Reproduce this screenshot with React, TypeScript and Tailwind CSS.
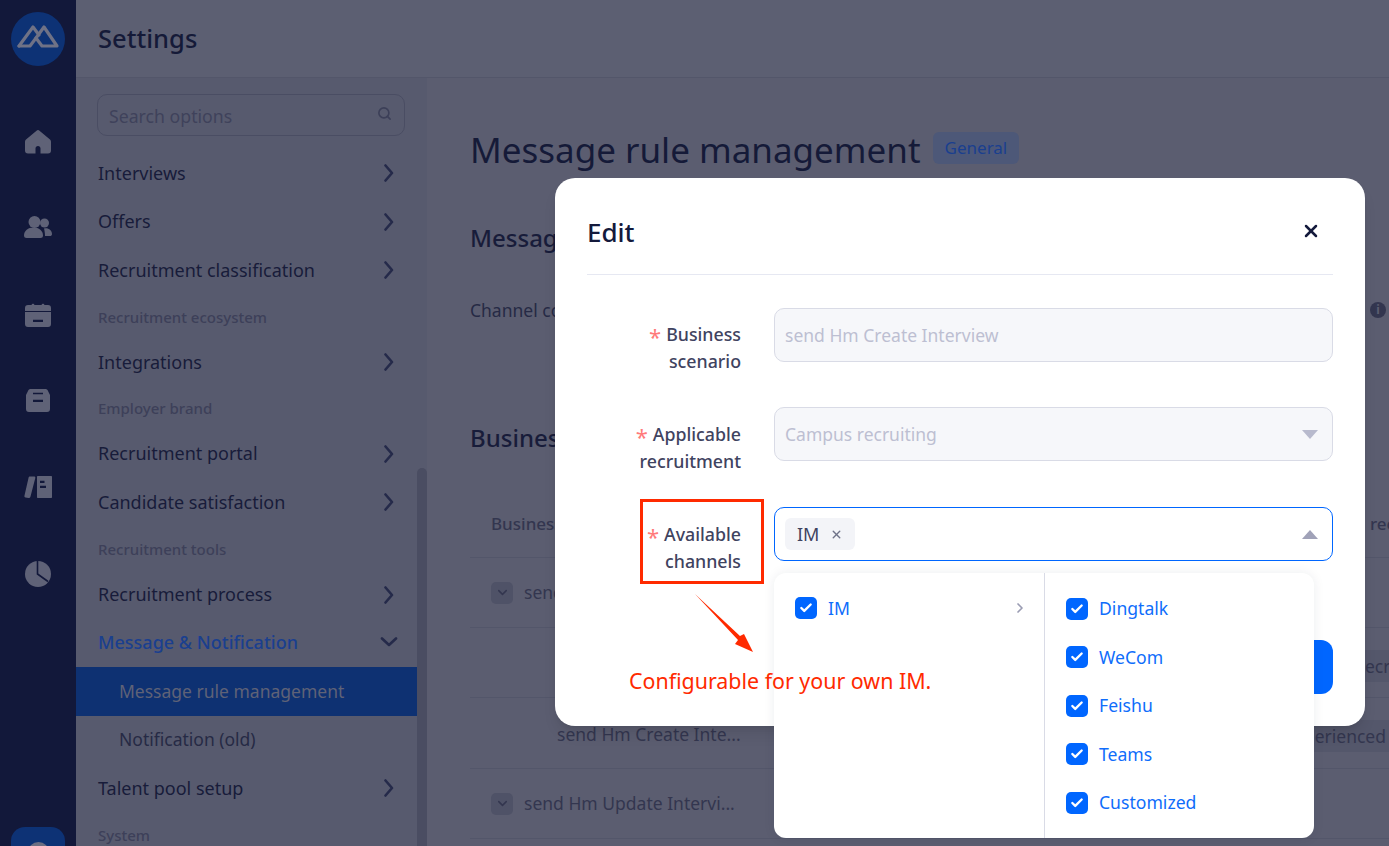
import React from "react";
import { ChevronDown, Search, X, Check, ChevronRight } from "lucide-react";

const FONT = "font-['Noto_Sans','Liberation_Sans',sans-serif]";

function NavRow({ label, open, className = "" }: { label: string; open?: boolean; className?: string }) {
  return (
    <div className={`flex h-[48.6px] items-center justify-between pl-[22px] pr-[23px] text-[18px] -translate-y-px ${open ? "text-[#1a3f8f] font-medium" : "text-[#181c3a]"} ${className}`}>
      <span>{label}</span>
      {open ? (
        <svg viewBox="0 0 18 10" className="w-[18px] h-[10px] -mr-[4px]" fill="none" stroke="#252a4a" strokeWidth="2.6" strokeLinecap="round" strokeLinejoin="round">
          <polyline points="2,1.500 9,8 16,1.500" />
        </svg>
      ) : (
        <svg viewBox="0 0 10 18" className="w-[10px] h-[18px]" fill="none" stroke="#252a4a" strokeWidth="2.6" strokeLinecap="round" strokeLinejoin="round">
          <polyline points="1.500,1.500 8,9 1.500,16.500" />
        </svg>
      )}
    </div>
  );
}

function NavHead({ label, className = "" }: { label: string; className?: string }) {
  return <div className={`flex h-[43px] items-center pl-[22px] text-[15px] font-medium text-[#3d4059] ${className}`}>{label}</div>;
}

function RailIcon({ children, className }: { children: React.ReactNode; className: string }) {
  return (
    <svg viewBox="0 0 28 28" className={`w-[28px] h-[28px] shrink-0 ${className}`} fill="#5f6277">
      {children}
    </svg>
  );
}

function Rail() {
  return (
    <div className="w-[76px] shrink-0 bg-[#12183a] flex flex-col items-center overflow-hidden">
      <div className="mt-[12px] w-[54px] h-[54px] shrink-0 rounded-full bg-[#0d3275]">
        <svg viewBox="0 0 54 54" className="w-[54px] h-[54px]" fill="none" stroke="#6f7286" strokeWidth="3.2" strokeLinejoin="round" strokeLinecap="round">
          <path d="M8 34 L22 15 L28 23" />
          <path d="M8 34 L19 34 L25 26" />
          <path d="M25 26 L33 15 L46 34 L31 34 L25 26" />
        </svg>
      </div>
      <RailIcon className="mt-[62px]">
        <path fillRule="evenodd" d="M12.500 2.700 C13.400 1.900 14.600 1.900 15.500 2.700 L26 11.500 C26.700 12.100 27 12.800 27 13.700 L27 22.500 C27 24.500 26 25.500 24 25.500 L4 25.500 C2 25.500 1 24.500 1 22.500 L1 13.700 C1 12.800 1.300 12.100 2 11.500 Z M11.500 25.500 L16.500 25.500 L16.500 20.500 C16.500 19 15.500 18 14 18 C12.500 18 11.500 19 11.500 20.500 Z" />
      </RailIcon>
      <RailIcon className="mt-[57px]">
        <circle cx="10.500" cy="9" r="6" />
        <circle cx="20.500" cy="10" r="4.500" />
        <path d="M0 22.500 C0 18 4 14.500 9.500 14.500 C15 14.500 19 18 19 22.500 C19 24.200 18 25 16.500 25 L2.500 25 C1 25 0 24.200 0 22.500 Z" />
        <path d="M20 15.500 C24.500 14.500 28 17.500 28 21 C28 22.500 27 23 26 23 L21 23 C21 20 20.500 17.500 20 15.500 Z" />
      </RailIcon>
      <RailIcon className="mt-[60px]">
        <path d="M4 4 L7.500 4 C8 2.400 10 2.400 10.500 4 L17.500 4 C18 2.400 20 2.400 20.500 4 L24 4 C26 4 27 5 27 7 L27 10 L1 10 L1 7 C1 5 2 4 4 4 Z" />
        <path fillRule="evenodd" d="M1 11 L27 11 L27 23 C27 25 26 26 24 26 L4 26 C2 26 1 25 1 23 Z M9 18.700 L9 21 L19 21 L19 18.700 Z" />
      </RailIcon>
      <RailIcon className="mt-[58px]">
        <path fillRule="evenodd" d="M7 2 L21 2 C22.500 2 23.500 2.500 24 4 L26 8 L26 22 C26 24 25 25 23 25 L5 25 C3 25 2 24 2 22 L2 8 L4 4 C4.500 2.500 5.500 2 7 2 Z M9 5.800 L9 7.300 L19 7.300 L19 5.800 Z M9 12.800 L9 15 L19 15 L19 12.800 Z" />
      </RailIcon>
      <RailIcon className="mt-[58px]">
        <path d="M6 3.500 L10 3.500 C11 3.500 11.500 4 11.300 5 L6.500 23.500 C6.200 24.700 5.500 25 4.500 25 L1.500 24.500 C0.500 24.300 0.200 23.500 0.500 22.500 L4.500 5 C4.700 4 5 3.500 6 3.500 Z" />
        <path fillRule="evenodd" d="M14 3 L27 3 C27.700 3 28 3.300 28 4 L28 24 C28 24.700 27.700 25 27 25 L14 25 C13.300 25 13 24.700 13 24 L13 4 C13 3.300 13.300 3 14 3 Z M16 7.800 L16 10 L20.500 10 L20.500 7.800 Z M16 12.800 L16 15 L22 15 L22 12.800 Z" />
      </RailIcon>
      <RailIcon className="mt-[58px]">
        <circle cx="14" cy="15" r="13" />
        <path d="M13.500 2 L13.500 15 L24 22.500" fill="none" stroke="#12183a" strokeWidth="1.600" />
      </RailIcon>
      <div className="mt-[240px] w-[54px] h-[60px] shrink-0 rounded-[14px] bg-[#0d3275] flex justify-center pt-[15px]">
        <div className="w-[21px] h-[21px] rounded-full bg-[#6b6e82]" />
      </div>
    </div>
  );
}

function Sidebar() {
  return (
    <div className="w-[351px] shrink-0 flex bg-[#575a6e] overflow-hidden">
      <div className="w-[341px] shrink-0 pt-[16px]">
        <div className="ml-[21px] mr-[12px] h-[42px] rounded-[10px] border border-[#4a4d63] flex items-center justify-between pl-[11px] pr-[12px] pt-[2px] text-[17.7px] text-[#3f425b] mb-[14px]">
          <span>Search options</span>
          <Search size={15} strokeWidth={2.6} className="text-[#3c3f58] -mt-[6px]" />
        </div>
        <NavRow label="Interviews" />
        <NavRow label="Offers" />
        <NavRow label="Recruitment classification" />
        <NavHead label="Recruitment ecosystem" />
        <NavRow label="Integrations" />
        <NavHead label="Employer brand" className="-translate-y-px" />
        <NavRow label="Recruitment portal" />
        <NavRow label="Candidate satisfaction" />
        <NavHead label="Recruitment tools" />
        <NavRow label="Recruitment process" className="translate-y-0" />
        <NavRow label="Message & Notification" open />
        <div className="h-[49px] -mt-px bg-[#0e3172] flex items-center pl-[43px] text-[17.5px] text-[#5f6277]">Message rule management</div>
        <div className="h-[47px] mb-[2px] flex items-center pl-[43px] text-[17.5px] text-[#262a45]">Notification (old)</div>
        <NavRow label="Talent pool setup" />
        <NavHead label="System" />
      </div>
      <div className="w-[10px] shrink-0 pt-[390px]">
        <div className="h-full rounded-t-[5px] bg-[#4a4d62]" />
      </div>
    </div>
  );
}

function ExpandBox() {
  return (
    <span className="w-[22px] h-[22px] rounded-[5px] bg-[#4f5267] flex items-center justify-center mr-[11px]">
      <ChevronDown size={15} strokeWidth={2.4} className="text-[#33364f]" />
    </span>
  );
}

function Content() {
  return (
    <div className="flex-1 min-w-0 bg-[#5b5d70] pl-[43px] overflow-hidden text-[#181c3a]">
      <div className="flex items-center h-[54px] mt-[45px]">
        <span className="text-[35px] text-[#151a38] whitespace-nowrap">Message rule management</span>
        <span className="ml-[12px] -mt-[4px] h-[32px] px-[12px] rounded-[6px] bg-[#4d5878] text-[#1a3f8f] text-[17px] flex items-center">General</span>
      </div>
      <div className="text-[24px] font-medium mt-[44px] h-[34px] leading-[34px]">Message settings</div>
      <div className="flex justify-between items-center mt-[41px] h-[28px] text-[17.5px] text-[#262a45] pr-[2px]">
        <span>Channel configuration</span>
        <span className="w-[16px] h-[16px] rounded-full bg-[#33364f] text-[#5b5d70] text-[12px] font-bold flex items-center justify-center mr-[1px]">i</span>
      </div>
      <div className="text-[24px] font-medium mt-[97px] h-[34px] leading-[34px]">Business scenarios</div>
      <div className="mt-[52px] h-[51px] pb-[16px] border-b border-[#53566a] flex justify-between items-center pl-[21px] text-[17px] font-medium text-[#33364f]">
        <span>Business scenario</span>
        <span className="w-[19px] overflow-hidden whitespace-nowrap">recruitment</span>
      </div>
      <div className="h-[70px] border-b border-[#53566a] flex items-center pl-[21px] text-[17.5px] text-[#33364f]">
        <ExpandBox />
        <span>send Hm Create Interview</span>
      </div>
      <div className="h-[70px] border-b border-[#53566a] flex items-center justify-end pt-[6px]">
        <span className="h-[32px] w-[24px] bg-[#54576b] overflow-hidden whitespace-nowrap text-[17.5px] leading-[32px] text-[#33364f]">ecruiting</span>
      </div>
      <div className="h-[71px] border-b border-[#53566a] flex items-center justify-between pl-[87px] pt-[2px] text-[17.5px] text-[#33364f]">
        <span>send Hm Create Inte...</span>
        <span className="h-[32px] mt-[3px] flex items-center bg-[#54576b] pl-[6px] pr-[3px] pt-[1px]">Experienced</span>
      </div>
      <div className="h-[70px] border-b border-[#53566a] flex items-center pl-[21px] text-[17.5px] text-[#33364f]">
        <ExpandBox />
        <span>send Hm Update Intervi...</span>
      </div>
    </div>
  );
}

function CheckBox() {
  return (
    <span className="w-[22px] h-[22px] rounded-[5px] bg-[#0066ff] flex items-center justify-center shrink-0">
      <Check size={14} strokeWidth={4} className="text-white" />
    </span>
  );
}

function Option({ label }: { label: string }) {
  return (
    <div className="h-[48.5px] flex items-center gap-[11px] text-[17.6px] text-[#0f6dfb]">
      <CheckBox />
      <span>{label}</span>
    </div>
  );
}

function Field({ lines, children, mb, pt }: { lines: [string, string]; children: React.ReactNode; mb: string; pt: string }) {
  return (
    <div className={`flex h-[54px] ${mb}`}>
      <div className={`w-[155px] shrink-0 pr-[1px] text-right text-[17.8px] leading-[27px] font-medium text-[#3f4360] ${pt}`}>
        <div>
          <span className="text-[22px] leading-[0] align-[-4px] text-[#ff7a7a] font-normal mr-[5px]">*</span>
          {lines[0]}
        </div>
        <div>{lines[1]}</div>
      </div>
      <div className="ml-[32px] flex-1">{children}</div>
    </div>
  );
}

function Modal() {
  return (
    <div className="absolute left-[555px] top-[178px] w-[810px] h-[548px] rounded-[20px] bg-white px-[32px] pt-[32px] shadow-lg">
      <div className="h-[65px] border-b border-[#e6e8f2] flex items-start justify-between pt-[2px]">
        <span className="text-[26px] font-medium leading-[40px] text-[#141a3c]">Edit</span>
        <X size={20} strokeWidth={3} className="text-[#141a3c] mt-[9px] mr-[12px]" />
      </div>
      <div className="mt-[33px]">
        <Field lines={["Business", "scenario"]} mb="mb-[45px]" pt="pt-[13px]">
          <div className="h-[54px] rounded-[10px] border border-[#d9dbe6] bg-[#f6f7fa] flex items-center pl-[10px] text-[17.5px] text-[#bdbfd2]">send Hm Create Interview</div>
        </Field>
        <Field lines={["Applicable", "recruitment"]} mb="mb-[46px]" pt="pt-[14px]">
          <div className="h-[54px] rounded-[10px] border border-[#d9dbe6] bg-[#f6f7fa] flex items-center justify-between pl-[10px] pr-[14px] text-[17.5px] text-[#bdbfd2]">
            <span>Campus recruiting</span>
            <span className="w-0 h-0 border-x-[8px] border-x-transparent border-t-[9px] border-t-[#b8bacd]" />
          </div>
        </Field>
        <Field lines={["Available", "channels"]} mb="mb-[79px]" pt="pt-[14px]">
          <div className="h-[54px] rounded-[10px] border border-[#0066ff] flex items-center justify-between pl-[10px] pr-[14px]">
            <span className="h-[32px] w-[70px] rounded-[6px] bg-[#f3f4f8] flex items-center pl-[12px] gap-[11px] text-[18px] text-[#3f4360]">
              IM
              <X size={13} strokeWidth={2.6} className="text-[#6f7288]" />
            </span>
            <span className="w-0 h-0 border-x-[8px] border-x-transparent border-b-[9px] border-b-[#a0a2b8]" />
          </div>
        </Field>
      </div>
      <div className="flex justify-end">
        <div className="w-[100px] h-[54px] rounded-[12px] bg-[#0066ff]" />
      </div>
      <div className="absolute left-[219px] top-[395px] w-[540px] h-[265px] rounded-[12px] bg-white shadow-[0_0_12px_rgba(30,35,70,0.08)] flex">
        <div className="w-[271px] shrink-0 border-r border-[#d9dbe6] pt-[11px] pl-[21px] pr-[16px]">
          <div className="h-[48.5px] flex items-center gap-[11px] text-[17.6px] text-[#0f6dfb]">
            <CheckBox />
            <span className="flex-1">IM</span>
            <ChevronRight size={16} strokeWidth={2.6} className="text-[#9a9cb3]" />
          </div>
        </div>
        <div className="flex-1 pt-[11.4px] pl-[21px]">
          <Option label="Dingtalk" />
          <Option label="WeCom" />
          <Option label="Feishu" />
          <Option label="Teams" />
          <Option label="Customized" />
        </div>
      </div>
    </div>
  );
}

function Watermark() {
  const tiles = Array.from({ length: 49 });
  return (
    <div className="absolute left-[-150px] top-0 w-[1939px] h-[846px] overflow-hidden pointer-events-none grid grid-cols-[repeat(7,277px)] auto-rows-[133px]">
      {tiles.map((_, i) => (
        <div key={i} className="flex items-center justify-center">
          <div className="-rotate-[31deg] whitespace-nowrap text-center text-[18px] leading-[22px] text-[#1a1f4a]/[0.025]">
            lixingwei@moka 2023-11-07
            <br />
            lixingwei
          </div>
        </div>
      ))}
    </div>
  );
}

function Annotation() {
  return (
    <>
      <div className="absolute left-[640px] top-[499px] w-[124px] h-[85px] border-[3px] border-[#ff2a00]" />
      <svg className="absolute left-[690px] top-[590px] w-[70px] h-[70px]" viewBox="0 0 70 70">
        <polygon points="5,4 50,46 54,44 63,62 45,54 48,50" fill="#ff2a00" />
      </svg>
      <div className="absolute left-[629px] top-[665px] text-[21.4px] leading-[32px] text-[#ff2a00] whitespace-nowrap">Configurable for your own IM.</div>
    </>
  );
}

export default function App() {
  return (
    <div className={`relative w-[1389px] h-[846px] overflow-hidden flex ${FONT}`}>
      <Rail />
      <div className="flex-1 min-w-0 flex flex-col">
        <div className="h-[78px] shrink-0 bg-[#5c5f72] border-b border-[#53566a] flex items-center pl-[22px] text-[25.5px] font-medium text-[#151a38]">Settings</div>
        <div className="flex-1 min-h-0 flex">
          <Sidebar />
          <Content />
        </div>
      </div>
      <Modal />
      <Watermark />
      <Annotation />
    </div>
  );
}
